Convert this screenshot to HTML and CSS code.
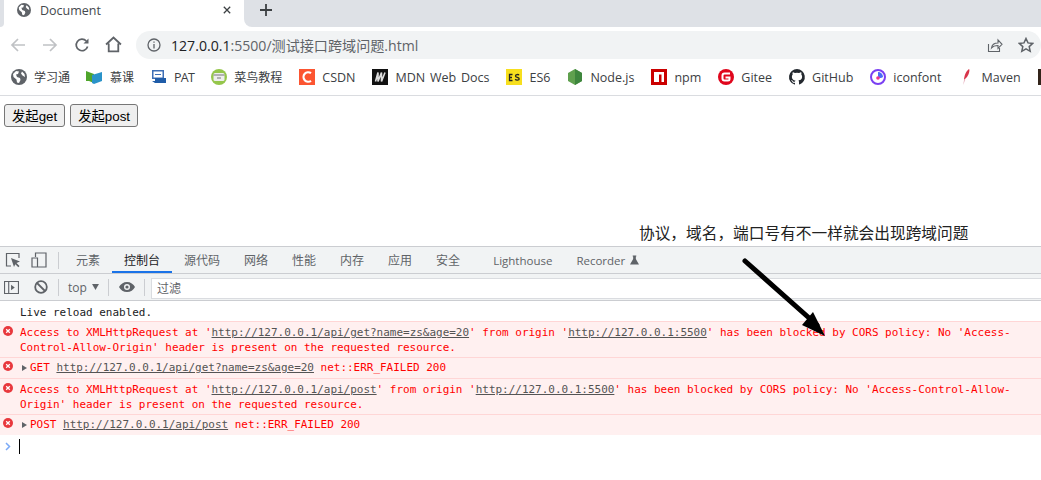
FILE: index.html
```html
<!DOCTYPE html>
<html lang="zh">
<head>
<meta charset="utf-8">
<title>Document</title>
<link rel="stylesheet" href="styles.css">
</head>
<body>
<div class="strip">
  <div class="strip-left"></div>
  <div class="tab">
    <svg class="favicon" viewBox="0 0 16 16"><use href="#globe"/></svg>
    <span class="tab-title">Document</span>
    <svg class="tab-close" viewBox="0 0 10 10"><path d="M1 1l8 8M9 1l-8 8"/></svg>
  </div>
  <div class="strip-rest">
    <svg class="tab-new" viewBox="0 0 12 12"><path d="M6 0v12M0 6h12"/></svg>
  </div>
</div>

<div class="toolbar">
  <svg class="nav-ic off" viewBox="0 0 16 16"><path d="M15 8H2M8 2L2 8l6 6"/></svg>
  <svg class="nav-ic off" viewBox="0 0 16 16"><path d="M1 8h13M8 2l6 6-6 6"/></svg>
  <svg class="nav-ic" viewBox="0 0 16 16"><path d="M13.6 9.5A5.8 5.8 0 1 1 12.3 4"/><path class="fill" d="M14.5 1.5v5h-5z"/></svg>
  <svg class="nav-ic home" viewBox="0 0 16 16"><path d="M1 8l7-6.5L15 8M3.5 7v7.5h9V7"/></svg>
  <div class="omnibox">
    <svg class="info" viewBox="0 0 14 14"><circle cx="7" cy="7" r="6"/><path d="M7 6v4.500M7 3.400v1.400"/></svg>
    <span class="url"><span class="host">127.0.0.1</span>:5500/测试接口跨域问题.html</span>
    <svg class="omni-ic" viewBox="0 0 16 16"><path d="M1.500 7v7.500h11V11M4.500 11c.5-3.500 3-5 6.500-5V3l4 4.300-4 4V8.500c-3 0-5 .7-6.500 2.500z"/></svg>
    <svg class="omni-ic star" viewBox="0 0 16 16"><path d="M8 1.500l2 4.400 4.800.5-3.600 3.200 1 4.700L8 11.900l-4.200 2.400 1-4.700L1.200 6.400 6 5.900z"/></svg>
  </div>
</div>

<div class="bookmarks">
  <div class="bm"><svg class="bm-ic" viewBox="0 0 16 16"><use href="#globe"/></svg><span class="cjk">学习通</span></div>
  <div class="bm"><svg class="bm-ic" viewBox="1 0 16 16"><path fill="#4fa52b" d="M0 2l8 3v9l-5-2H0z"/><path fill="#2a93c9" d="M6 6l10-3v9l-8 3-2-1z"/></svg><span class="cjk">慕课</span></div>
  <div class="bm"><svg class="bm-ic" viewBox="0 0 16 16"><path fill="#3e6fb5" d="M1 1h12v9H1z"/><path fill="#fff" d="M2.500 2.500h9v6h-9z"/><path fill="#1f5ca8" d="M4 9h11v5H4l-3-2h3z"/><path stroke="#3e6fb5" fill="none" d="M4 5.500h6"/></svg><span class="tight">PAT</span></div>
  <div class="bm"><svg class="bm-ic" viewBox="0 0 16 16"><circle cx="8" cy="8" r="8" fill="#95c64b"/><rect x="2.500" y="4" width="11" height="8" rx="1.500" fill="#eee"/><path d="M2.500 6h11" stroke="#777"/><path d="M6 9h4" stroke="#777"/></svg><span class="cjk">菜鸟教程</span></div>
  <div class="bm"><svg class="bm-ic" viewBox="0 0 16 16"><path fill="#fc5531" d="M0 0h16v16H0z"/><path fill="none" stroke="#fff" stroke-width="2.200" d="M12 4.200A4.700 4.700 0 1 0 12 11.800"/></svg><span>CSDN</span></div>
  <div class="bm"><svg class="bm-ic" viewBox="0 0 16 16"><path fill="#111" d="M0 0h16v16H0z"/><path fill="none" stroke="#ddd" stroke-width="1.600" d="M3.500 12.500L6 3.500v9L9.500 3.500v9L13 3.500"/></svg><span>MDN Web Docs</span></div>
  <div class="bm"><svg class="bm-ic" viewBox="0 0 16 16"><path fill="#f7df1e" d="M0 0h16v16H0z"/><path fill="none" stroke="#222" stroke-width="1.300" d="M6.500 5.500H3.500v6h3M3.500 8.500h2.500M13 6.200c-.5-1-3.500-1-3.500.7 0 2 3.700 1 3.700 3 0 1.500-3.300 1.500-4 .3"/></svg><span>ES6</span></div>
  <div class="bm"><svg class="bm-ic" viewBox="0 0 16 16"><path fill="#5fa04e" d="M8 0l7 4v8l-7 4-7-4V4z"/><path fill="#3e863d" d="M8 0l7 4v8l-7 4z"/></svg><span>Node.js</span></div>
  <div class="bm"><svg class="bm-ic" viewBox="0 0 16 16"><path fill="#cb0000" d="M0 0h16v16H0z"/><path fill="#fff" d="M3 3h10v10h-2.500V5.500H8V13H3z"/></svg><span>npm</span></div>
  <div class="bm"><svg class="bm-ic" viewBox="0 0 16 16"><circle cx="8" cy="8" r="8" fill="#e0061c"/><path fill="none" stroke="#fff" stroke-width="2" d="M12 4.500H6.500a2 2 0 0 0-2 2v3a2 2 0 0 0 2 2H10a1.500 1.500 0 0 0 1.500-1.500V8.500H7.500"/></svg><span>Gitee</span></div>
  <div class="bm"><svg class="bm-ic" viewBox="0 0 16 16"><path fill="#24292f" d="M8 0a8 8 0 0 0-2.500 15.600c.4.100.5-.2.500-.4v-1.400c-2.200.5-2.700-1-2.700-1-.4-.9-.9-1.200-.9-1.200-.7-.5.100-.5.100-.5.800.1 1.200.8 1.200.8.700 1.200 1.900.9 2.300.7.100-.5.300-.9.500-1.100-1.800-.2-3.600-.9-3.600-4 0-.9.300-1.600.8-2.100-.1-.2-.4-1 .1-2.100 0 0 .7-.2 2.200.8a7.500 7.500 0 0 1 4 0c1.500-1 2.200-.8 2.200-.8.400 1.100.2 1.900.1 2.100.5.600.8 1.300.8 2.100 0 3.100-1.900 3.700-3.700 3.900.3.300.6.800.6 1.500v2.200c0 .2.100.5.600.4A8 8 0 0 0 8 0z"/></svg><span>GitHub</span></div>
  <div class="bm"><svg class="bm-ic" viewBox="0 0 16 16"><circle cx="8" cy="8" r="7" fill="#fff" stroke="#7a3ff2" stroke-width="2"/><path fill="#4a6cf7" d="M8 3a5 5 0 0 1 5 5c-2 2-5 1-5-1z"/><circle cx="8" cy="9" r="1.800" fill="#f0318b"/></svg><span>iconfont</span></div>
  <div class="bm"><svg class="bm-ic" viewBox="0 0 16 16"><path fill="#d8344a" d="M11 0c1 1 0 5-2 8L6 11c0-4 2-9 5-11z"/><path fill="#e8b9c4" d="M6 11l1.500-.5L5 16z"/></svg><span>Maven</span></div>
  <div class="bm-cut"></div>
</div>

<main class="page">
  <button class="btn">发起get</button>
  <button class="btn">发起post</button>
</main>

<section class="devtools">
  <div class="dt-tabs">
    <svg class="dt-ic" viewBox="0 0 16 16"><path d="M6 14H1.500V1.500H14V6"/><path class="fill" d="M6 6l9 3.500-3.500 1.500 3 3-1.200 1.200-3-3L9 15z"/></svg>
    <svg class="dt-ic" viewBox="0 0 16 16"><path d="M4.500 5V1h10.500v14H6.500M1 6h5.500v9H1z"/></svg>
    <i class="sep"></i>
    <span class="dt-tab">元素</span>
    <span class="dt-tab on">控制台</span>
    <span class="dt-tab">源代码</span>
    <span class="dt-tab">网络</span>
    <span class="dt-tab">性能</span>
    <span class="dt-tab">内存</span>
    <span class="dt-tab">应用</span>
    <span class="dt-tab">安全</span>
    <span class="dt-tab lh">Lighthouse</span>
    <span class="dt-tab latin">Recorder<svg class="flask" viewBox="0 0 10 10"><path d="M3 0h4v1H6.500v3L10 10H0l3.500-6V1H3z"/></svg></span>
  </div>
  <div class="dt-filter">
    <svg class="dt-ic side" viewBox="0 0 16 14"><path d="M.5.500h15v13H.5zM5 .5v13"/><path class="fill" d="M7.500 4l4 3-4 3z"/></svg>
    <svg class="dt-ic block" viewBox="0 0 14 14"><circle cx="7" cy="7" r="5.800"/><path d="M3 3l8 8"/></svg>
    <i class="sep"></i>
    <span class="ctx">top</span>
    <svg class="caret" viewBox="0 0 8 7"><path d="M0 0h8L4 7z"/></svg>
    <i class="sep"></i>
    <svg class="eye" viewBox="0 0 16 10"><path fill-rule="evenodd" d="M8 0c3.500 0 6.500 2 8 5-1.500 3-4.500 5-8 5S1.500 8 0 5c1.500-3 4.500-5 8-5zm0 2a3 3 0 1 0 0 6 3 3 0 0 0 0-6z"/><circle cx="8" cy="5" r="1.600"/></svg>
    <i class="sep"></i>
    <div class="filter-input">过滤</div>
  </div>
  <div class="console">
    <div class="log">Live reload enabled.</div>
    <div class="err multi">
      <svg class="err-ic" viewBox="0 0 10 10"><use href="#errdot"/></svg>
      <div class="msg">Access to XMLHttpRequest at '<a>http://127.0.0.1/api/get?name=zs&amp;age=20</a>' from origin '<a>http://127.0.0.1:5500</a>' has been blocked by CORS policy: No 'Access-Control-Allow-Origin' header is present on the requested resource.</div>
    </div>
    <div class="err">
      <svg class="err-ic" viewBox="0 0 10 10"><use href="#errdot"/></svg>
      <div class="msg net"><i class="tri"></i>GET <a>http://127.0.0.1/api/get?name=zs&amp;age=20</a> net::ERR_FAILED 200</div>
    </div>
    <div class="err multi">
      <svg class="err-ic" viewBox="0 0 10 10"><use href="#errdot"/></svg>
      <div class="msg">Access to XMLHttpRequest at '<a>http://127.0.0.1/api/post</a>' from origin '<a>http://127.0.0.1:5500</a>' has been blocked by CORS policy: No 'Access-Control-Allow-Origin' header is present on the requested resource.</div>
    </div>
    <div class="err">
      <svg class="err-ic" viewBox="0 0 10 10"><use href="#errdot"/></svg>
      <div class="msg net"><i class="tri"></i>POST <a>http://127.0.0.1/api/post</a> net::ERR_FAILED 200</div>
    </div>
    <div class="prompt">
      <svg class="chev" viewBox="0 0 6 9"><path d="M1 1l3.500 3.500L1 8"/></svg>
      <i class="cursor"></i>
    </div>
  </div>
</section>

<div class="note">协议，域名，端口号有不一样就会出现跨域问题</div>
<svg class="arrow" viewBox="0 0 100 90"><path class="shaft" d="M5 6l72 64"/><path class="head" d="M62 70l11-13 12 24z"/></svg>

<svg class="defs" width="0" height="0">
  <defs>
    <g id="globe"><circle cx="8" cy="8" r="8" fill="#5f6368"/><path fill="#fff" d="M2 5l3-3 3 .5-1 2.500-2 .5L6 8l3 1 .5 2L8 14l-2-.5-.5-3L2.500 8zM11 2.500l2.500 2.500.5 3-2.500-1.500-1.500-2z"/></g>
    <g id="errdot"><circle cx="5" cy="5" r="5" fill="#e8383d"/><path d="M3.200 3.200l3.600 3.600M6.800 3.200L3.200 6.800" stroke="#fff" stroke-width="1.300"/></g>
  </defs>
</svg>
</body>
</html>
```
FILE: styles.css
```css
* { box-sizing: border-box; }
html, body { margin: 0; height: 480px; overflow: hidden; background: #fff; }
body {
  position: relative;
  display: flex;
  flex-direction: column;
  font-family: "Open Sans", "Noto Sans CJK SC", sans-serif;
  color: #3c4043;
}
svg { display: block; flex: none; }

.strip { display: flex; height: 27px; background: #fff; flex: none; }
.strip-left { width: 4px; background: #dee1e6; border-bottom-right-radius: 6px; }
.tab { width: 240px; display: flex; align-items: center; padding: 0 0 7px 13px; }
.favicon { width: 14px; height: 14px; }
.tab-title { margin-left: 9px; font-size: 12.500px; color: #45494d; width: 183px; }
.tab-close { width: 8px; height: 8px; fill: none; stroke: #3c4043; stroke-width: 1.600; }
.strip-rest { flex: 1; background: #dee1e6; border-bottom-left-radius: 8px; padding: 0 0 7px 16px; display: flex; align-items: center; }
.tab-new { width: 12px; height: 12px; fill: none; stroke: #3c4043; stroke-width: 1.800; }

.toolbar { display: flex; height: 32px; align-items: flex-end; flex: none; padding-left: 10px; }
.nav-ic { width: 16px; height: 16px; margin: 0 16px 6px 0; fill: none; stroke: #5f6368; stroke-width: 1.700; }
.nav-ic.off { stroke: #c0c2c5; }
.nav-ic .fill { fill: #5f6368; stroke: none; }
.nav-ic.home { margin-right: 14px; width: 17px; height: 17px; margin-left: -1px; }
.omnibox { flex: 1; height: 28px; background: #f1f3f4; border-radius: 14px; display: flex; align-items: center; padding-left: 11px; }
.info { width: 14px; height: 14px; fill: none; stroke: #5f6368; stroke-width: 1.300; }
.url { margin-left: 10px; font-size: 14.100px; color: #5f6368; flex: 1; white-space: nowrap; }
.host { color: #202124; }
.omni-ic { width: 16px; height: 16px; fill: none; stroke: #5f6368; stroke-width: 1.100; margin-right: 15px; }
.omni-ic.star { margin-right: 7px; stroke-width: 1.500; }

.bookmarks { display: flex; gap: 17px; height: 37px; align-items: center; padding-left: 11px; border-bottom: 1px solid #dadce0; flex: none; overflow: hidden; font-size: 12.500px; word-spacing: 1.500px; color: #3c4043; }
.bm { display: flex; align-items: center; gap: 7px; white-space: nowrap; }
.cjk { font-size: 12px; }
.tight { letter-spacing: -0.700px; }
.bm-ic { width: 16px; height: 16px; overflow: visible; }
.bm-cut { width: 16px; height: 16px; background: #33241a; flex: none; }

.page { height: 150px; padding: 8px 4px; flex: none; display: flex; align-items: flex-start; gap: 5px; }
.btn { height: 23px; padding: 0 7px; font: 13.330px "Liberation Sans", "Noto Sans CJK SC", sans-serif; color: #000; background: #efefef; border: 1px solid #767676; border-radius: 3px; }

.devtools { flex: 1; display: flex; flex-direction: column; min-height: 0; }
.dt-tabs { display: flex; align-items: center; height: 28px; padding-left: 5px; background: #f1f3f4; border-top: 1px solid #cbcdd1; border-bottom: 1px solid #cbcdd1; font-size: 12px; color: #5f6368; flex: none; }
.dt-ic { width: 16px; height: 16px; fill: none; stroke: #5f6368; stroke-width: 1.200; margin-right: 10px; }
.dt-ic .fill { fill: #5f6368; stroke: none; }
.sep { width: 1px; height: 17px; background: #cbcdd1; margin: 0 5px 0 0; flex: none; }
.dt-tabs .sep { margin: 0 5px 0 1px; }
.dt-tab { height: 26px; padding: 0 12px; display: flex; align-items: center; white-space: nowrap; }
.dt-tab.on { color: #202124; border-bottom: 2px solid #1a73e8; padding-top: 2px; }
.dt-tab.lh { margin-left: 9px; font-size: 11.500px; }
.dt-tab.latin { font-size: 11.500px; }
.flask { width: 9px; height: 10px; fill: #5f6368; margin-left: 5px; }

.dt-filter { display: flex; align-items: center; height: 27px; padding-left: 4px; background: #f1f3f4; border-bottom: 1px solid #cbcdd1; font-size: 12px; color: #5f6368; flex: none; }
.side { width: 15px; height: 13px; margin-right: 15px; }
.block { width: 14px; height: 14px; stroke-width: 1.800; margin-right: 10px; }
.ctx { margin-left: 4px; width: 24px; }
.caret { width: 7px; height: 6px; fill: #5f6368; margin-right: 9px; }
.eye { width: 16px; height: 10px; fill: #5f6368; margin: 0 9px 0 5px; }
.filter-input { flex: 1; height: 21px; align-self: flex-start; margin: 4px 0 0 1px; background: #fff; border: 1px solid #dadce0; border-right: 0; line-height: 20px; padding-left: 5px; color: #5f6368; font-size: 12px; }

.console { flex: 1; font: 10.970px/15px "DejaVu Sans Mono", "Liberation Mono", monospace; padding-top: 2px; }
.log { height: 18px; padding: 2px 0 0 20px; color: #202124; }
.err { display: flex; background: #fff0f0; border-top: 1px solid #ffd6d6; color: #f00; padding: 2px 0 3px 3px; }
.err.multi { padding: 3px 0 2px 3px; }
.err:last-of-type { border-bottom: 1px solid #ffd6d6; }
.err-ic { width: 10px; height: 10px; margin-top: 1px; }
.msg { margin-left: 7px; flex: 1; }
.msg.net { white-space: pre; margin-left: 9px; }
.msg a { color: #545454; text-decoration: underline; }
.tri { display: inline-block; width: 0; height: 0; border-left: 5px solid #5f6368; border-top: 3.500px solid transparent; border-bottom: 3.500px solid transparent; margin-right: 3px; }
.prompt { display: flex; align-items: center; padding: 4px 0 0 5px; }
.chev { width: 6px; height: 9px; fill: none; stroke: #7baaf7; stroke-width: 1.500; }
.cursor { width: 1px; height: 15px; background: #000; margin-left: 8px; }

.note { position: absolute; left: 639px; top: 222px; font-size: 15.700px; line-height: 22px; color: #222; white-space: nowrap; }
.arrow { position: absolute; left: 740px; top: 255px; width: 100px; height: 90px; }
.shaft { fill: none; stroke: #000; stroke-width: 5; stroke-linecap: round; }
.head { fill: #000; }
.defs { position: absolute; }
```
